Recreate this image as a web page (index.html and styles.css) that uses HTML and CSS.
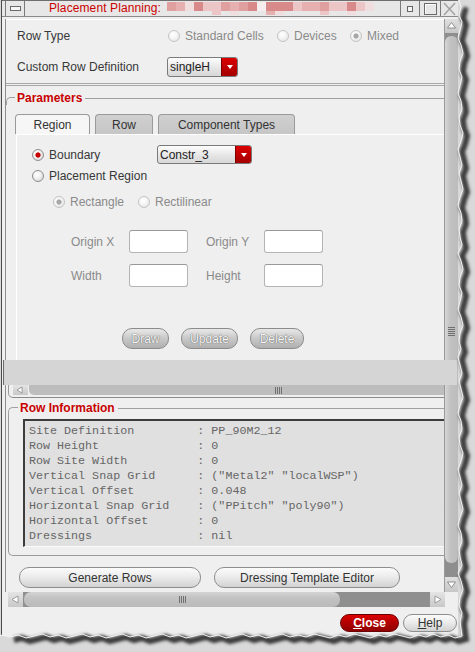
FILE: index.html
```html
<!DOCTYPE html>
<html>
<head>
<meta charset="utf-8">
<title>Placement Planning</title>
<link rel="stylesheet" href="styles.css">
</head>
<body>
<div class="window">
  <div class="titlebar">
    <div class="tb-menu"><span class="tb-menu-bar"></span></div>
    <div class="tb-title">Placement Planning:</div>
    <div class="tb-redact">
      <span class="k1"></span><span class="k2"></span><span class="k3"></span><span class="k4"></span><span class="k5"></span><span class="k5"></span><span class="k1"></span><span class="k2"></span><span class="k1"></span><span class="k4"></span><span class="k6"></span><span class="k4"></span><span class="k4"></span><span class="k4"></span><span class="k5"></span><span class="k2"></span><span class="k2"></span><span class="k1"></span><span class="k5"></span><span class="k5"></span><span class="k4"></span><span class="k5"></span><span class="k3"></span>
      <span></span><span></span><span></span><span></span><span></span><span class="k5"></span><span></span><span class="k3"></span><span></span><span></span><span></span><span class="k2"></span><span class="k3"></span><span></span><span></span><span></span><span></span><span class="k5"></span><span></span><span></span><span class="k3"></span><span></span><span></span>
    </div>
    <div class="tb-spacer"></div>
    <div class="tb-btns">
      <div class="tb-b1"><span class="tb-min"></span></div>
      <div class="tb-b2"><span class="tb-max"></span></div>
      <div class="tb-b3">
        <svg width="15" height="14" viewBox="0 0 15 14"><path d="M2 1 L13 13 M13 1 L2 13" stroke="#a4a4a4" stroke-width="1.6" fill="none"/></svg>
      </div>
    </div>
  </div>

  <div class="client">
    <div class="main">
      <div class="content">
        <div class="group-top">
          <div class="row">
            <span class="lbl w151">Row Type</span>
            <span class="ritem w109"><span class="radio dis"></span><span class="dtext">Standard Cells</span></span>
            <span class="ritem w73"><span class="radio dis"></span><span class="dtext">Devices</span></span>
            <span class="ritem"><span class="radio dis dison"></span><span class="dtext">Mixed</span></span>
          </div>
          <div class="row r2">
            <span class="lbl w150">Custom Row Definition</span>
            <span class="combo c1"><span class="combo-text">singleH</span><span class="combo-btn"><span class="tri"></span></span></span>
          </div>
        </div>

        <div class="params">
          <div class="legend"><span class="legend-text">Parameters</span></div>
          <div class="tabs">
            <div class="tab sel t1">Region</div>
            <div class="tab t2">Row</div>
            <div class="tab t3">Component Types</div>
          </div>
          <div class="tabpanel">
            <div class="pr pr1">
              <span class="ritem w125"><span class="radio on"></span><span class="lbl">Boundary</span></span>
              <span class="combo c2"><span class="combo-text">Constr_3</span><span class="combo-btn"><span class="tri"></span></span></span>
            </div>
            <div class="pr pr2">
              <span class="ritem"><span class="radio"></span><span class="lbl">Placement Region</span></span>
            </div>
            <div class="pr pr3">
              <span class="ritem w85"><span class="radio dis dison"></span><span class="dtext">Rectangle</span></span>
              <span class="ritem"><span class="radio dis"></span><span class="dtext">Rectilinear</span></span>
            </div>
            <div class="pg pg1">
              <span class="dtext glbl">Origin X</span><span class="field"></span>
              <span class="dtext glbl">Origin Y</span><span class="field"></span>
            </div>
            <div class="pg pg2">
              <span class="dtext glbl">Width</span><span class="field"></span>
              <span class="dtext glbl">Height</span><span class="field"></span>
            </div>
            <div class="pbtns">
              <span class="dbtn b-draw">Draw</span>
              <span class="dbtn b-upd">Update</span>
              <span class="dbtn b-del">Delete</span>
            </div>
          </div>
        </div>

        <div class="inner-hscroll">
          <span class="sarrow sa-small">
            <svg width="15" height="10" viewBox="0 0 15 10"><polygon points="4,5 9,2 9,8" fill="#fff" stroke="#8a8a8a" stroke-width="0.8"/></svg>
          </span>
          <span class="ithumb"><span class="hgrip"></span></span>
        </div>

        <div class="rowinfo">
          <div class="legend legend2"><span class="legend-text">Row Information</span></div>
          <div class="rowinfo-body">
            <div class="infobox"><pre class="info">Site Definition         : PP_90M2_12
Row Height              : 0
Row Site Width          : 0
Vertical Snap Grid      : ("Metal2" "localWSP")
Vertical Offset         : 0.048
Horizontal Snap Grid    : ("PPitch" "poly90")
Horizontal Offset       : 0
Dressings               : nil</pre></div>
          </div>
        </div>

        <div class="actions">
          <span class="btn b-gen">Generate Rows</span>
          <span class="btn b-dress">Dressing Template Editor</span>
        </div>
      </div>

      <div class="vscroll">
        <div class="varrow va-up">
          <svg width="13" height="14" viewBox="0 0 13 14"><polygon points="6.5,3.5 10.5,9 2.5,9" fill="#fff" stroke="#7a7a7a" stroke-width="0.8"/></svg>
        </div>
        <div class="vthumb"><div class="vgrip"></div></div>
        <div class="vtrack"></div>
        <div class="varrow va-down">
          <svg width="13" height="15" viewBox="0 0 13 15"><polygon points="2.5,5 10.5,5 6.5,10.5" fill="#fff" stroke="#7a7a7a" stroke-width="0.8"/></svg>
        </div>
      </div>
    </div>

    <div class="hscroll-row">
      <div class="hscroll">
        <span class="sarrow">
          <svg width="15" height="15" viewBox="0 0 15 15"><polygon points="4,7.5 10,4 10,11" fill="#fff" stroke="#8a8a8a" stroke-width="0.8"/></svg>
        </span>
        <span class="hthumb"><span class="hgrip"></span></span>
        <span class="htrack"></span>
        <span class="sarrow">
          <svg width="15" height="15" viewBox="0 0 15 15"><polygon points="11,7.5 5,4 5,11" fill="#fff" stroke="#8a8a8a" stroke-width="0.8"/></svg>
        </span>
      </div>
      <div class="corner"></div>
    </div>

    <div class="footer">
      <span class="fbtn close"><u>C</u>lose</span>
      <span class="fbtn help"><u>H</u>elp</span>
    </div>
  </div>

  <div class="strip"></div>
</div>

<svg class="torn" width="475" height="652" viewBox="0 0 475 652">
  <defs>
    <filter id="blur" x="-20%" y="-20%" width="140%" height="140%"><feGaussianBlur stdDeviation="1.6"/></filter>
  </defs>
  <polygon fill="#d9d9d9" points="475,0 459,0 461,7 459,15 462,22 460,30 458,38 461,45 463,53 460,61 459,69 462,77 460,85 458,93 461,101 462,109 459,117 460,125 463,133 461,141 458,149 460,157 462,165 459,173 461,181 463,189 460,197 458,205 461,213 462,221 459,229 460,237 462,245 458,253 461,261 463,269 460,277 459,285 462,293 460,301 458,309 461,317 463,325 460,333 459,341 461,349 458,357 460,365 462,373 459,381 461,389 463,397 460,405 458,413 461,421 462,429 459,437 460,445 463,453 461,461 458,469 460,477 462,485 459,493 461,501 463,509 460,517 458,525 461,533 462,541 459,549 460,557 462,565 458,573 461,581 463,589 460,597 459,605 462,613 460,621 461,629 462,636 455,638 448,635 441,637 433,634 426,637 418,635 410,638 402,636 394,634 386,637 378,635 370,638 362,636 354,634 346,637 338,635 330,638 322,636 314,634 306,637 298,635 290,637 282,634 274,636 266,638 258,635 250,637 242,634 234,636 226,638 218,635 210,637 202,634 194,636 186,638 178,635 170,637 162,634 154,636 146,638 138,635 130,637 122,634 114,636 106,638 98,635 90,637 82,634 74,636 66,638 58,635 50,637 42,634 34,636 26,638 18,635 10,637 2,635 0,636 0,652 475,652"/>
  <polyline filter="url(#blur)" transform="translate(4,3)" fill="none" stroke="#3e3e3e" stroke-width="6" points="459,6 461,7 459,15 462,22 460,30 458,38 461,45 463,53 460,61 459,69 462,77 460,85 458,93 461,101 462,109 459,117 460,125 463,133 461,141 458,149 460,157 462,165 459,173 461,181 463,189 460,197 458,205 461,213 462,221 459,229 460,237 462,245 458,253 461,261 463,269 460,277 459,285 462,293 460,301 458,309 461,317 463,325 460,333 459,341 461,349 458,357 460,365 462,373 459,381 461,389 463,397 460,405 458,413 461,421 462,429 459,437 460,445 463,453 461,461 458,469 460,477 462,485 459,493 461,501 463,509 460,517 458,525 461,533 462,541 459,549 460,557 462,565 458,573 461,581 463,589 460,597 459,605 462,613 460,621 461,629 462,636 455,638 448,635 441,637 433,634 426,637 418,635 410,638 402,636 394,634 386,637 378,635 370,638 362,636 354,634 346,637 338,635 330,638 322,636 314,634 306,637 298,635 290,637 282,634 274,636 266,638 258,635 250,637 242,634 234,636 226,638 218,635 210,637 202,634 194,636 186,638 178,635 170,637 162,634 154,636 146,638 138,635 130,637 122,634 114,636 106,638 98,635 90,637 82,634 74,636 66,638 58,635 50,637 42,634 34,636 26,638 18,635 10,637"/>
  <polyline fill="none" stroke="#f6f6f6" stroke-width="1" points="459,0 461,7 459,15 462,22 460,30 458,38 461,45 463,53 460,61 459,69 462,77 460,85 458,93 461,101 462,109 459,117 460,125 463,133 461,141 458,149 460,157 462,165 459,173 461,181 463,189 460,197 458,205 461,213 462,221 459,229 460,237 462,245 458,253 461,261 463,269 460,277 459,285 462,293 460,301 458,309 461,317 463,325 460,333 459,341 461,349 458,357 460,365 462,373 459,381 461,389 463,397 460,405 458,413 461,421 462,429 459,437 460,445 463,453 461,461 458,469 460,477 462,485 459,493 461,501 463,509 460,517 458,525 461,533 462,541 459,549 460,557 462,565 458,573 461,581 463,589 460,597 459,605 462,613 460,621 461,629 462,636 455,638 448,635 441,637 433,634 426,637 418,635 410,638 402,636 394,634 386,637 378,635 370,638 362,636 354,634 346,637 338,635 330,638 322,636 314,634 306,637 298,635 290,637 282,634 274,636 266,638 258,635 250,637 242,634 234,636 226,638 218,635 210,637 202,634 194,636 186,638 178,635 170,637 162,634 154,636 146,638 138,635 130,637 122,634 114,636 106,638 98,635 90,637 82,634 74,636 66,638 58,635 50,637 42,634 34,636 26,638 18,635 10,637 2,635 0,636"/>
</svg>
</body>
</html>
```

FILE: styles.css
```css
* { box-sizing: border-box; }
html, body { margin: 0; padding: 0; }
body {
  width: 475px;
  height: 652px;
  overflow: hidden;
  position: relative;
  background: #d9d9d9;
  font-family: "Liberation Sans", Arial, sans-serif;
  font-size: 12px;
  color: #383838;
}

.window {
  margin-left: 1px;
  width: 457px;
  height: 636px;
  border-left: 1px solid #4a4a4a;
  background: #efefef;
  position: relative;
  display: flex;
  flex-direction: column;
}

/* ---------- title bar ---------- */
.titlebar {
  height: 17px;
  flex: none;
  display: flex;
  background: #e7e7e7;
  border-top: 1px solid #6e6e6e;
  border-bottom: 1px solid #8a8a8a;
}
.tb-menu {
  margin-left: 3px;
  width: 20px;
  border-left: 1px solid #7a7a7a;
  border-right: 1px solid #7a7a7a;
  display: flex;
  align-items: center;
  justify-content: center;
}
.tb-menu-bar {
  width: 11px;
  height: 5px;
  border: 1px solid #6a6a6a;
  background: #f6f6f6;
}
.tb-title {
  margin-left: 24px;
  width: 118px;
  color: #cc0000;
  line-height: 15px;
  font-size: 12px;
  letter-spacing: 0.1px;
}
.tb-redact {
  width: 207px;
  margin-top: 1px;
  display: grid;
  grid-template-columns: repeat(23, 9px);
  grid-template-rows: 9px 4px;
}
.k1 { background: #e0a0a0; }
.k2 { background: #e6b0b0; }
.k3 { background: #f0dede; }
.k4 { background: #d88a8a; }
.k5 { background: #ecc6c6; }
.k6 { background: #f6eeee; }
.tb-spacer { flex: 1; }
.tb-btns {
  display: flex;
  border-left: 1px solid #7a7a7a;
}
.tb-b1, .tb-b2, .tb-b3 {
  display: flex;
  align-items: center;
  justify-content: center;
}
.tb-b1 { width: 19px; border-right: 1px solid #7a7a7a; }
.tb-b2 { width: 21px; border-right: 1px solid #7a7a7a; }
.tb-b3 { width: 17px; }
.tb-min {
  width: 6px;
  height: 6px;
  border: 1px solid #666;
  background: #f4f4f4;
}
.tb-max {
  width: 13px;
  height: 12px;
  border: 1px solid #6a6a6a;
  box-shadow: inset 1px 1px 0 #fff;
}

/* ---------- client ---------- */
.client {
  flex: 1;
  display: flex;
  flex-direction: column;
  padding-top: 2px;
  padding-left: 3px;
}
.main {
  display: flex;
  height: 573px;
  flex: none;
}
.content {
  width: 439px;
  border-left: 1px solid #8e8e8e;
  display: flex;
  flex-direction: column;
  overflow: hidden;
  position: relative;
}

.group-top {
  height: 65px;
  flex: none;
  border-top: 1px solid #fff;
  border-bottom: 1px solid #a8a8a8;
  padding: 6px 0 0 11px;
}
.row {
  display: flex;
  align-items: center;
  height: 20px;
}
.r2 { margin-top: 11px; }
.lbl { color: #383838; white-space: nowrap; }
.dtext { color: #8a8a8a; white-space: nowrap; }
.w151 { width: 151px; }
.w150 { width: 150px; }
.w109 { width: 109px; }
.w73 { width: 73px; }
.w125 { width: 125px; }
.w85 { width: 85px; }

.ritem {
  display: flex;
  align-items: center;
  gap: 5px;
  flex: none;
}
.radio {
  width: 12px;
  height: 12px;
  flex: none;
  border-radius: 50%;
  border: 1px solid #8e8e8e;
  background: radial-gradient(circle at 40% 35%, #ffffff 0, #f4f4f4 35%, #cfcfcf 100%);
}
.radio.on {
  background: radial-gradient(circle at 50% 50%, #c80000 0, #c80000 2.2px, transparent 3px),
              radial-gradient(circle at 40% 35%, #ffffff 0, #f4f4f4 35%, #cfcfcf 100%);
}
.radio.dis {
  border-color: #c4c4c4;
  background: radial-gradient(circle at 40% 35%, #ffffff 0, #f6f6f6 40%, #dedede 100%);
}
.radio.dis.dison {
  background: radial-gradient(circle at 50% 50%, #a8a8a8 0, #a8a8a8 2.2px, transparent 3px),
              radial-gradient(circle at 40% 35%, #ffffff 0, #f6f6f6 40%, #dedede 100%);
}

.combo {
  display: flex;
  flex: none;
  border: 1px solid #7a7a7a;
  border-radius: 3px;
  overflow: hidden;
  background: linear-gradient(#fdfdfd, #e4e4e4 60%, #d8d8d8);
}
.c1 { width: 71px; height: 20px; }
.c2 { width: 95px; height: 19px; }
.combo-text {
  flex: 1;
  padding-left: 2px;
  color: #222;
  line-height: 18px;
  font-size: 12px;
}
.combo-btn {
  width: 16px;
  background: linear-gradient(#dc0000, #a40000);
  border-left: 1px solid #7a0000;
  display: flex;
  align-items: center;
  justify-content: center;
}
.tri {
  width: 0;
  height: 0;
  border-left: 3.5px solid transparent;
  border-right: 3.5px solid transparent;
  border-top: 4px solid #fff;
}

/* ---------- parameters ---------- */
.params {
  flex: none;
  margin-top: 1px;
  border-top: 1px solid #a8a8a8;
}
.legend {
  margin-top: 5px;
  height: 14px;
  display: flex;
  align-items: center;
}
.legend::before {
  content: "";
  width: 8px;
  height: 7px;
  align-self: flex-end;
  border-top: 1px solid #a0a0a0;
  border-left: 1px solid #a0a0a0;
  border-top-left-radius: 5px;
}
.legend::after {
  content: "";
  flex: 1;
  height: 0;
  border-top: 1px solid #a0a0a0;
}
.legend-text {
  padding: 0 3px 0 2px;
  color: #c80000;
  font-weight: bold;
  font-size: 12px;
}

.tabs {
  margin-top: 9px;
  margin-left: 9px;
  height: 20px;
  display: flex;
  gap: 5px;
}
.tab {
  height: 20px;
  border: 1px solid #9a9a9a;
  border-bottom: none;
  border-radius: 4px 4px 0 0;
  background: linear-gradient(#d0d0d0, #c6c6c6);
  display: flex;
  align-items: center;
  justify-content: center;
  color: #333;
  font-size: 12px;
}
.tab.sel { background: #f6f6f6; }
.t1 { width: 75px; }
.t2 { width: 58px; }
.t3 { width: 137px; }

.tabpanel {
  margin-left: 10px;
  height: 251px;
  border-top: 1px solid #fff;
  border-left: 1px solid #fff;
  padding: 10px 0 0 15px;
}
.pr {
  display: flex;
  align-items: center;
}
.pr1 { height: 19px; }
.pr2 { height: 18px; margin-top: 3px; }
.pr3 { height: 18px; margin-top: 8px; padding-left: 21px; }
.pg {
  display: flex;
  align-items: center;
  height: 23px;
  padding-left: 39px;
}
.pg1 { margin-top: 19px; }
.pg2 { margin-top: 11px; }
.glbl { width: 58px; }
.field {
  width: 59px;
  height: 23px;
  margin-right: 18px;
  background: #fff;
  border: 1px solid #b4b4b4;
  border-top-color: #999;
  border-radius: 3px;
}
.pbtns {
  margin-top: 41px;
  padding-left: 90px;
  display: flex;
  gap: 12px;
}
.dbtn {
  height: 21px;
  border: 1px solid #8c8c8c;
  border-radius: 10px;
  background: linear-gradient(#e8e8e8, #c8c8c8 50%, #b0b0b0);
  color: #f6f6f6;
  text-shadow: 0 0 1px #666, 0 0 1px #666;
  display: flex;
  align-items: center;
  justify-content: center;
  font-size: 12px;
}
.b-draw { width: 47px; }
.b-upd { width: 57px; }
.b-del { width: 54px; }

/* ---------- inner horizontal scroll ---------- */
.inner-hscroll {
  flex: none;
  margin-left: 2px;
  height: 13px;
  border-left: 1px solid #999;
  border-bottom: 1px solid #8a8a8a;
  border-bottom-left-radius: 5px;
  padding-left: 4px;
  display: flex;
}
.sarrow {
  width: 15px;
  flex: none;
  display: flex;
  align-items: center;
  justify-content: center;
  background: linear-gradient(#e4e4e4, #c8c8c8);
}
.sa-small { height: 10px; }
.ithumb {
  flex: 1;
  margin-left: 1px;
  height: 10px;
  background: #bdbdbd;
  border-radius: 0 0 0 5px;
  display: flex;
  align-items: center;
  padding-left: 246px;
}
.hgrip {
  width: 7px;
  height: 7px;
  background: repeating-linear-gradient(90deg, #707070 0 1px, transparent 1px 2px);
}

/* ---------- row information ---------- */
.rowinfo {
  flex: none;
  margin-left: 2px;
  height: 158px;
  padding-top: 3px;
}
.legend2 { margin-top: 0; }
.legend2::before { width: 9px; }
.rowinfo-body {
  border-left: 1px solid #999;
  border-bottom: 1px solid #999;
  border-bottom-left-radius: 5px;
  padding: 4px 0 8px 14px;
}
.infobox {
  height: 128px;
  background: #e0e0e0;
  border-top: 2px solid #3c3c3c;
  border-left: 2px solid #3c3c3c;
  border-bottom: 1px solid #fafafa;
  padding: 3px 0 0 4px;
}
.info {
  margin: 0;
  font-family: "Liberation Mono", "Courier New", monospace;
  font-size: 11.7px;
  line-height: 15px;
  color: #666;
}

/* ---------- actions ---------- */
.actions {
  flex: none;
  height: 36px;
  padding: 11px 0 0 13px;
  display: flex;
  gap: 13px;
}
.btn {
  height: 21px;
  border: 1px solid #8e8e8e;
  border-radius: 10px;
  background: linear-gradient(#fbfbfb, #ececec 45%, #d2d2d2);
  color: #333;
  display: flex;
  align-items: center;
  justify-content: center;
  font-size: 12px;
}
.b-gen { width: 182px; }
.b-dress { width: 186px; }

/* ---------- vertical scroll ---------- */
.vscroll {
  width: 14px;
  flex: none;
  display: flex;
  flex-direction: column;
  background: #8e8e8e;
  border-left: 1px solid #9a9a9a;
}
.varrow {
  display: flex;
  align-items: center;
  justify-content: center;
  background: linear-gradient(#e0e0e0, #c6c6c6);
}
.va-up { height: 14px; }
.va-down { height: 15px; }
.vthumb {
  margin-top: 3px;
  height: 527px;
  background: linear-gradient(90deg, #d6d6d6, #c2c2c2 40%, #bcbcbc);
  border-radius: 6px;
}
.vgrip {
  margin: 291px auto 0;
  width: 7px;
  height: 9px;
  background: repeating-linear-gradient(#6e6e6e 0 1px, transparent 1px 2px);
}
.vtrack { flex: 1; }

/* ---------- bottom horizontal scroll ---------- */
.hscroll-row {
  height: 15px;
  flex: none;
  display: flex;
}
.hscroll {
  margin-left: 3px;
  width: 437px;
  display: flex;
  background: #8f8f8f;
}
.hthumb {
  width: 316px;
  margin-left: 1px;
  background: linear-gradient(#d4d4d4, #c2c2c2 40%, #bababa);
  border-radius: 7px;
  display: flex;
  align-items: center;
  justify-content: center;
}
.htrack { flex: 1; }
.corner { flex: 1; background: #efefef; }

/* ---------- footer ---------- */
.footer {
  flex: 1;
  display: flex;
  justify-content: flex-end;
  align-items: flex-start;
  padding-top: 7px;
  padding-right: 1px;
  gap: 4px;
}
.fbtn {
  height: 18px;
  border-radius: 9px;
  display: flex;
  align-items: center;
  justify-content: center;
  font-size: 12px;
}
.close {
  width: 59px;
  background: linear-gradient(#dc0000, #b00000 50%, #900000);
  border: 1px solid #6a0000;
  color: #fff;
  font-weight: bold;
}
.help {
  width: 54px;
  background: linear-gradient(#fbfbfb, #ececec 45%, #d2d2d2);
  border: 1px solid #8e8e8e;
  color: #333;
}

/* ---------- overlays ---------- */
.strip {
  position: absolute;
  top: 360px;
  left: 1px;
  width: 454px;
  height: 25px;
  background: #d5d5d5;
  border-left: 1px solid #6a6a6a;
}
.torn {
  position: absolute;
  left: 0;
  top: 0;
  pointer-events: none;
}
```
